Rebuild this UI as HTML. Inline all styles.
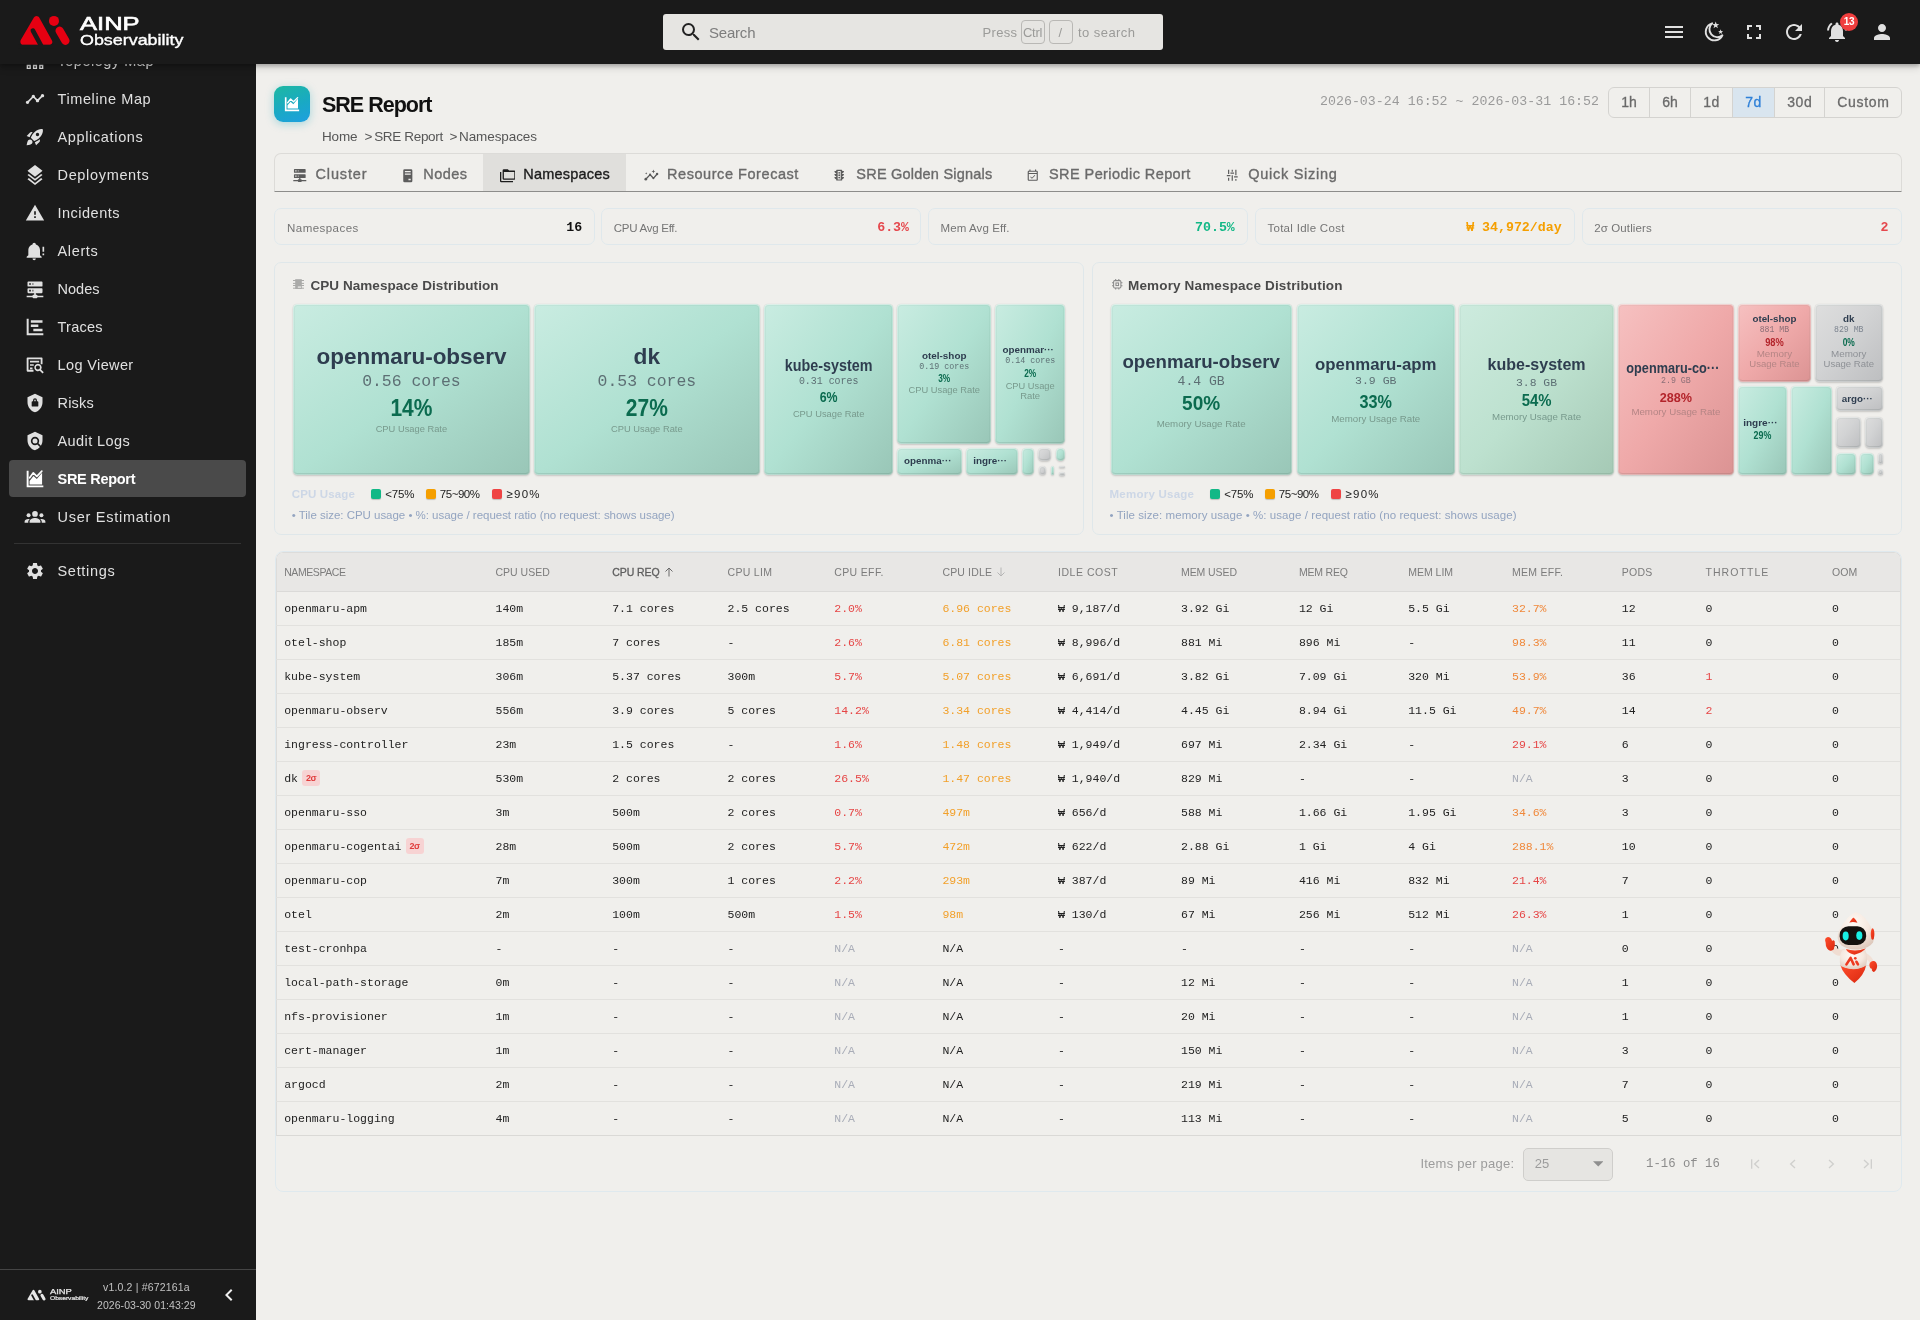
<!DOCTYPE html>
<html lang="en">
<head>
<meta charset="utf-8">
<title>SRE Report - Namespaces</title>
<style>
*{box-sizing:border-box;margin:0;padding:0}
html,body{width:1920px;height:1320px;overflow:hidden;background:#f0efec;font-family:"Liberation Sans",sans-serif;color:#222}
body{position:relative}
#wrap{position:absolute;left:0;top:0;width:1920px;height:1320px;will-change:transform}
.mono{font-family:"Liberation Mono",monospace}
svg{display:block}
.abs{position:absolute}
.t{position:absolute;white-space:nowrap;line-height:1}
/* header */
#hdr{position:absolute;left:0;top:0;width:1920px;height:64px;background:#1a1a1a;z-index:30;box-shadow:0 2px 4px rgba(0,0,0,.25),0 4px 8px rgba(0,0,0,.12)}
#hdr .lg{position:absolute;white-space:nowrap;color:#fff;transform-origin:0 0;line-height:1}
#search{position:absolute;left:663px;top:14px;width:500px;height:36px;background:#e6e5e2;border-radius:3px}
#search .kbd{position:absolute;top:6px;height:24px;border:1px solid #b9b8b5;border-radius:4px}
.hico{position:absolute;top:20px}
#badge{position:absolute;left:1840px;top:13px;width:18px;height:18px;border-radius:9px;background:#f03e3e;color:#fff;font-size:10px;line-height:18px;text-align:center;letter-spacing:-.2px;font-weight:700}
/* sidebar */
#side{position:absolute;left:0;top:64px;width:256px;height:1256px;background:#1a1a1a;z-index:20;overflow:hidden}
.nav{position:absolute;left:9px;width:237px;height:37px;border-radius:4px;color:#e0e0e0;font-size:14.5px}
.nav svg{position:absolute;left:16px;top:8.5px;overflow:visible}
.nav span{position:absolute;left:48.5px;top:9.7px;line-height:19px;white-space:nowrap}
.nav.on{background:#4a4a4a;color:#fff}
.nav.on span{font-weight:700}
.sdiv{position:absolute;left:14px;width:227px;height:1px;background:#333}
#sfoot{position:absolute;left:0;top:1205px;width:256px;height:51px;border-top:1px solid #454545}
/* main cards */
.card{position:absolute;border:1px solid #dfe7ea;border-radius:7px;background:#f0efec}
/* tabs */
#tabs{position:absolute;left:274px;top:152.5px;width:1628px;height:39px;border:1px solid #dcdbd8;border-bottom:1.5px solid #8d8d8b;border-radius:7px 7px 0 0}
#tabs .act{position:absolute;left:208px;top:0;width:143px;height:37px;background:#e0dfdc}
.tabt{position:absolute;top:167px;font-size:14.5px;color:#6a6a6a;white-space:nowrap;line-height:1;-webkit-text-stroke:.35px #6a6a6a}
.tabi{position:absolute;color:#555}
/* range buttons */
#rng{position:absolute;left:1608px;top:86.5px;width:294px;height:31px;border:1px solid #d4d3d0;border-radius:6px;overflow:hidden}
#rng div{position:absolute;top:0;height:29px;border-left:1px solid #d4d3d0}
.rngt{position:absolute;top:95px;font-size:14px;color:#6a6a6a;line-height:1;white-space:nowrap;-webkit-text-stroke:.3px #6a6a6a}
/* stats */
.stat{position:absolute;top:207.9px;width:320.3px;height:37.6px;border:1px solid #dfe8ec;border-radius:7px}
.statl{position:absolute;top:222.5px;font-size:11.5px;color:#757575;line-height:1;white-space:nowrap}
.statv{position:absolute;top:220.5px;font-size:13.25px;font-weight:700;line-height:1;white-space:nowrap;font-family:"Liberation Mono",monospace;text-align:right}
/* treemap */
.tile{position:absolute;border-radius:4.5px;overflow:hidden;box-shadow:0 1px 2px rgba(0,0,0,.16),0 0 1px rgba(0,0,0,.14),inset 0 0 0 1px rgba(255,255,255,.28),inset 0 0 0 2px rgba(0,60,40,.035),inset 0 1px 0 rgba(255,255,255,.3),inset 0 -2px 0 rgba(0,0,0,.06)}
.tile.g{background:linear-gradient(to bottom right,#c9ece1 0%,#b0e1d2 50%,#99c6b7 100%)}
.tile.g2{background:linear-gradient(to bottom right,#cdebde 0%,#bde1cf 50%,#a5c9b5 100%)}
.tile.r{background:linear-gradient(to bottom right,#f6c1c1 0%,#efa9a9 50%,#db9393 100%)}
.tile.k{background:linear-gradient(to bottom right,#dedede 0%,#d2d3d4 45%,#bdbec0 100%)}
.tn{position:absolute;left:0;width:100%;text-align:center;white-space:nowrap;line-height:1;font-weight:700;color:#2e3d4f}
.tv{position:absolute;left:0;width:100%;text-align:center;white-space:nowrap;line-height:1;color:#5d6f74;font-family:"Liberation Mono",monospace}
.tp{position:absolute;left:0;width:100%;text-align:center;white-space:nowrap;line-height:1;font-weight:700;color:#0b6b4f}
.tl{position:absolute;left:0;width:100%;text-align:center;white-space:nowrap;line-height:1;color:#789a8d}
.r .tp{color:#b3242b}.r .tl{color:#b58585}.r .tv{color:#8d6f77}
.k .tl{color:#8e9196}.k .tv{color:#7d8590}
.lgsq{position:absolute;width:10px;height:10px;border-radius:2px;top:488.5px;box-shadow:0 1px 1px rgba(0,0,0,.2)}
.lgt{position:absolute;top:488.5px;font-size:11.5px;color:#222;line-height:1;white-space:nowrap}
/* table */
#tblcard{position:absolute;left:274.5px;top:551px;width:1627.3px;height:640.5px;border:1px solid #dfe9ee;border-radius:8px;overflow:hidden}
#tblin{position:absolute;left:0;top:0;width:1625.3px;height:584.4px;border:1px solid #dddcda;border-bottom:1.6px solid #dad9d6;border-radius:7px 7px 0 0;overflow:hidden}
#thead{position:absolute;left:0;top:0;width:1625px;height:39px;background:#e8e7e5;border-bottom:1px solid #dbdad8}
.th{position:absolute;top:567.4px;font-size:10.5px;color:#7c7c7c;line-height:1;white-space:nowrap}
.th.b{color:#5e5e5e;-webkit-text-stroke:.3px #5e5e5e}
.row{position:absolute;left:276px;width:1624px;height:34px;border-bottom:1px solid #e2e1de}
.td{position:absolute;font-family:"Liberation Mono",monospace;font-size:11.5px;line-height:1;white-space:nowrap;color:#222}
.red{color:#e64545}.org{color:#f2a02a}.org2{color:#f0883a}.na{color:#a9adb8}
.sig{position:absolute;width:18px;height:16px;border-radius:3px;background:#f7d3d3;color:#e03c3c;font-size:9px;line-height:16px;text-align:center;font-family:"Liberation Sans",sans-serif;letter-spacing:-.3px;font-weight:700}

</style>
</head>
<body>
<div id="wrap">
<div id="hdr">
<svg class="abs" style="left:0;top:0" width="200" height="64" viewBox="0 0 200 64"><g>
 <path d="M23.470 41.690 L36.600 19.200 L49.100 41.690 Z" fill="#e60012" stroke="#e60012" stroke-width="6.250" stroke-linejoin="round"/>
 <path d="M32.900 30.600 L42.100 47.500" stroke="#1a1a1a" stroke-width="4.700" stroke-linecap="round" fill="none"/>
 <rect x="18" y="44.900" width="36" height="4" fill="#1a1a1a"/>
 <circle cx="53.970" cy="20.900" r="5" fill="#e60012"/>
 <path d="M59.600 30.750 L65.400 40.750" stroke="#e60012" stroke-width="8.300" stroke-linecap="round" fill="none"/>
</g></svg>
<span class="lg" style="left:80.300px;top:15.100px;font-size:18px;-webkit-text-stroke:.6px #fff;transform:scaleX(1.420)">AINP</span>
<span class="lg" style="left:80.200px;top:32.800px;font-size:14.500px;-webkit-text-stroke:.35px #fff;transform:scaleX(1.234)">Observability</span>
<div id="search">
 <svg class="abs" style="left:16px;top:6.300px" width="24" height="24" viewBox="0 0 24 24"><path fill="#222" d="M15.500 14h-.790l-.280-.270A6.470 6.470 0 0 0 16 9.500 6.500 6.500 0 1 0 9.500 16c1.610 0 3.090-.590 4.230-1.570l.270.280v.790l5 4.990L20.490 19l-4.990-5zm-6 0C7.010 14 5 11.990 5 9.500S7.010 5 9.500 5 14 7.010 14 9.500 11.990 14 9.500 14z"/></svg>
 <span class="t" style="left:46px;top:10.500px;font-size:15px;color:#7d7d7d;letter-spacing:-0.206px">Search</span>
 <span class="t" style="left:319.500px;top:11.500px;font-size:13px;color:#9b9b99;letter-spacing:0.316px">Press</span>
 <span class="kbd" style="left:358px;width:24px"></span><span class="t" style="left:360px;top:12px;font-size:13px;color:#9b9b99;letter-spacing:-.3px">Ctrl</span>
 <span class="kbd" style="left:386px;width:24px"></span><span class="t" style="left:395.500px;top:12px;font-size:13px;color:#9b9b99">/</span>
 <span class="t" style="left:415px;top:11.500px;font-size:13px;color:#9b9b99;letter-spacing:0.439px">to search</span>
</div>
<svg class="hico" style="left:1662px" width="24" height="24" viewBox="0 0 24 24"><path fill="#e0e0e0" d="M3 18h18v-2H3v2zm0-5h18v-2H3v2zm0-7v2h18V6H3z"/></svg>
<svg class="hico" style="left:1702px" width="24" height="24" viewBox="0 0 24 24"><path fill="none" stroke="#e0e0e0" stroke-width="1.900" stroke-linejoin="round" d="M10.200 3.300A8.700 8.700 0 1 0 20.400 15.300A7 7 0 0 1 10.200 3.300z"/><path fill="#e0e0e0" d="M13.700 1.600l.900 2.500 2.600.100-2.100 1.600.800 2.500-2.200-1.500-2.200 1.500.800-2.500-2.100-1.600 2.600-.100zM18.600 9.300l.650 1.800 1.900.050-1.500 1.150.550 1.800-1.600-1.050-1.600 1.050.550-1.800-1.500-1.150 1.900-.050z"/></svg>
<svg class="hico" style="left:1742px" width="24" height="24" viewBox="0 0 24 24"><path fill="#e0e0e0" d="M7 14H5v5h5v-2H7v-3zm-2-4h2V7h3V5H5v5zm12 7h-3v2h5v-5h-2v3zM14 5v2h3v3h2V5h-5z"/></svg>
<svg class="hico" style="left:1782px" width="24" height="24" viewBox="0 0 24 24"><path fill="#e0e0e0" d="M17.650 6.350C16.200 4.900 14.210 4 12 4c-4.420 0-7.990 3.580-7.990 8s3.570 8 7.990 8c3.730 0 6.840-2.550 7.730-6h-2.080c-.820 2.330-3.040 4-5.650 4-3.310 0-6-2.690-6-6s2.690-6 6-6c1.660 0 3.140.690 4.220 1.780L13 11h7V4l-2.350 2.350z"/></svg>
<svg class="hico" style="left:1825px" width="24" height="24" viewBox="0 0 24 24"><path fill="#e0e0e0" d="M7.580 4.080L6.150 2.650C3.750 4.480 2.170 7.300 2.030 10.500h2c.150-2.650 1.510-4.970 3.550-6.420zm12.390 6.420h2c-.150-3.200-1.730-6.020-4.120-7.850l-1.420 1.430c2.020 1.450 3.390 3.770 3.540 6.420zM18 11c0-3.070-1.640-5.640-4.500-6.320V4c0-.830-.670-1.500-1.500-1.500s-1.500.670-1.500 1.500v.680C7.630 5.360 6 7.920 6 11v5l-2 2v1h16v-1l-2-2v-5zm-6 11c.140 0 .270-.010.400-.040.650-.140 1.180-.580 1.440-1.180.100-.240.150-.500.150-.780h-4c.010 1.100.900 2 2.010 2z"/></svg>
<div id="badge">13</div>
<svg class="hico" style="left:1870px" width="24" height="24" viewBox="0 0 24 24"><path fill="#e0e0e0" d="M12 12c2.210 0 4-1.790 4-4s-1.790-4-4-4-4 1.790-4 4 1.790 4 4 4zm0 2c-2.670 0-8 1.340-8 4v2h16v-2c0-2.660-5.330-4-8-4z"/></svg>
</div>
<div id="side">
<div class="nav" style="top:-22.0px"><svg width="20" height="20" viewBox="0 0 24 24" fill="currentColor"><path d="M2 16.600h5v5H2zm7.500 0h5v5h-5zM17 16.600h5v5h-5zM3.600 18.200v1.800h1.800v-1.800zm7.500 0v1.800h1.800v-1.800zm7.500 0v1.800h1.800v-1.800z" fill-rule="evenodd"/></svg><span style="letter-spacing:0.520px">Topology Map</span></div>
<div class="nav" style="top:16.0px"><svg width="20" height="20" viewBox="0 0 24 24" fill="currentColor"><path d="M23 8c0 1.100-.900 2-2 2-.180 0-.350-.020-.510-.070l-3.560 3.550c.050.160.070.340.070.520 0 1.100-.900 2-2 2s-2-.900-2-2c0-.180.020-.360.070-.520l-2.550-2.550c-.160.050-.340.070-.520.070s-.360-.020-.520-.070l-4.550 4.560c.050.160.070.330.070.510 0 1.100-.900 2-2 2s-2-.900-2-2 .900-2 2-2c.180 0 .350.020.510.070l4.560-4.550C8.020 9.360 8 9.180 8 9c0-1.100.900-2 2-2s2 .900 2 2c0 .180-.020.360-.070.520l2.550 2.550c.160-.050.340-.070.520-.070s.360.020.520.070l3.550-3.560C19.020 8.350 19 8.180 19 8c0-1.100.900-2 2-2s2 .900 2 2z"/></svg><span style="letter-spacing:0.609px">Timeline Map</span></div>
<div class="nav" style="top:54.0px"><svg width="20" height="20" viewBox="0 0 24 24" fill="currentColor"><path d="M9.190 6.350c-2.040 2.290-3.440 5.580-3.570 5.890L2 10.690l4.050-4.050c.470-.470 1.150-.680 1.810-.550l1.330.260zM11.170 17s3.740-1.550 5.890-3.700c5.400-5.400 4.500-9.620 4.210-10.570-.950-.300-5.170-1.190-10.570 4.210C8.550 9.090 7 12.830 7 12.830L11.170 17zm6.480-2.190c-2.290 2.040-5.580 3.440-5.890 3.570L13.310 22l4.050-4.050c.470-.470.680-1.150.550-1.810l-.260-1.330zM9 18c0 .830-.340 1.580-.880 2.120C6.940 21.300 2 22 2 22s.700-4.940 1.880-6.120C4.420 15.340 5.170 15 6 15c1.660 0 3 1.340 3 3zm4-9c0-1.100.900-2 2-2s2 .900 2 2-.900 2-2 2-2-.900-2-2z"/></svg><span style="letter-spacing:0.647px">Applications</span></div>
<div class="nav" style="top:92.0px"><svg width="20" height="20" viewBox="0 0 24 24" fill="currentColor"><path d="M12 0L3 7l1.630 1.270L12 14l7.360-5.730L21 7l-9-7zm7.370 10.730L12 16.460l-7.380-5.730L3 12l9 7 9-7-1.630-1.270zm0 5L12 21.460l-7.380-5.730L3 17l9 7 9-7-1.630-1.270z"/></svg><span style="letter-spacing:0.667px">Deployments</span></div>
<div class="nav" style="top:130.0px"><svg width="20" height="20" viewBox="0 0 24 24" fill="currentColor"><path d="M1 21h22L12 2 1 21zm12-3h-2v-2h2v2zm0-4h-2v-4h2v4z"/></svg><span style="letter-spacing:0.494px">Incidents</span></div>
<div class="nav" style="top:168.0px"><svg width="20" height="20" viewBox="0 0 24 24" fill="currentColor"><path d="M21 7h2v6h-2zm0 8h2v2h-2zM11 2a2 2 0 0 0-2 2v.290C6.120 5.140 4 7.820 4 11v6l-2 2v1h18v-1l-2-2v-6c0-3.180-2.120-5.860-5-6.710V4a2 2 0 0 0-2-2zm-2 19a2 2 0 0 0 4 0z"/></svg><span style="letter-spacing:0.644px">Alerts</span></div>
<div class="nav" style="top:206.0px"><svg width="20" height="20" viewBox="0 0 24 24" fill="currentColor"><path fill-rule="evenodd" d="M13 19h1a1 1 0 0 1 1 1h7v2h-7a1 1 0 0 1-1 1h-4a1 1 0 0 1-1-1H2v-2h7a1 1 0 0 1 1-1h1v-2H4a1 1 0 0 1-1-1v-4a1 1 0 0 1 1-1h16a1 1 0 0 1 1 1v4a1 1 0 0 1-1 1h-7v2zM4 3h16a1 1 0 0 1 1 1v4a1 1 0 0 1-1 1H4a1 1 0 0 1-1-1V4a1 1 0 0 1 1-1zm5 4h1V5H9v2zm0 8h1v-2H9v2zM5 5v2h2V5H5zm0 8v2h2v-2H5z"/></svg><span style="letter-spacing:0.020px">Nodes</span></div>
<div class="nav" style="top:244.0px"><svg width="20" height="20" viewBox="0 0 24 24" fill="currentColor"><path d="M2 2h2.400v17.600H22V22H2zM7 4h14v3H7zm0 5h9v3H7zm3 5h11v3H10z"/></svg><span style="letter-spacing:0.244px">Traces</span></div>
<div class="nav" style="top:282.0px"><svg width="20" height="20" viewBox="0 0 24 24" fill="currentColor"><path fill-rule="evenodd" d="M3 3h17a1 1 0 0 1 1 1v7.200h-2.200V5.200H4.200v12.600h6V20H3a1 1 0 0 1-1-1V4a1 1 0 0 1 1-1zm3 4h11v2H6zm0 4h4.500v2H6zm0 4h3v2H6zm9.500-4.500a4.500 4.500 0 0 1 3.750 7l3.250 3.250-1.500 1.500-3.250-3.250A4.500 4.500 0 1 1 15.500 10.500zm0 2a2.500 2.500 0 1 0 0 5 2.500 2.500 0 0 0 0-5z"/></svg><span style="letter-spacing:0.380px">Log Viewer</span></div>
<div class="nav" style="top:320.0px"><svg width="20" height="20" viewBox="0 0 24 24" fill="currentColor"><path fill-rule="evenodd" d="M12 1L3 5v6c0 5.550 3.840 10.740 9 12 5.160-1.260 9-6.450 9-12V5l-9-4zm0 5.200a2.300 2.300 0 0 1 2.300 2.300v1.300h.700a1 1 0 0 1 1 1v4.400a1 1 0 0 1-1 1H9a1 1 0 0 1-1-1v-4.400a1 1 0 0 1 1-1h.700V8.500A2.300 2.300 0 0 1 12 6.200zm0 1.500a.800.800 0 0 0-.800.800v1.300h1.600V8.500a.800.800 0 0 0-.800-.800z"/></svg><span style="letter-spacing:0.212px">Risks</span></div>
<div class="nav" style="top:358.0px"><svg width="20" height="20" viewBox="0 0 24 24" fill="currentColor"><path d="M21 5l-9-4-9 4v6c0 5.550 3.840 10.740 9 12 2.300-.560 4.330-1.900 5.880-3.710l-3.120-3.120c-1.940 1.290-4.580 1.070-6.290-.640-1.950-1.950-1.950-5.120 0-7.070 1.950-1.950 5.120-1.950 7.070 0 1.710 1.710 1.920 4.350.640 6.290l2.900 2.900C20.290 15.690 21 13.380 21 11V5z"/><circle cx="12" cy="12" r="3"/></svg><span style="letter-spacing:0.419px">Audit Logs</span></div>
<div class="nav on" style="top:396.0px"><svg width="20" height="20" viewBox="0 0 24 24" fill="currentColor"><path d="M2 2h2.300v17.700H22V22H2z"/><path d="M5.500 18.500v-4.200l4.700-5.800 4 3.600 6.300-7.600v14z"/><path fill="none" stroke="currentColor" stroke-width="2" stroke-linejoin="round" stroke-linecap="round" d="M5.600 10.600l4.400-6 4.200 4.200 6-6.300"/></svg><span style="letter-spacing:-0.286px">SRE Report</span></div>
<div class="nav" style="top:434.0px"><svg width="20" height="20" viewBox="0 0 24 24" fill="currentColor"><circle cx="12" cy="8.300" r="3.400"/><path d="M5.500 19v-1.500c0-2.700 3.500-4.300 6.500-4.300s6.500 1.600 6.500 4.300V19z"/><circle cx="4.300" cy="10" r="2.400"/><path d="M-.500 19v-1.300c0-2 2.100-3.300 4.600-3.300.600 0 1.200.080 1.700.220C4.500 15.600 3.900 16.600 3.900 17.800V19z"/><circle cx="19.700" cy="10" r="2.400"/><path d="M24.500 19v-1.300c0-2-2.100-3.300-4.600-3.300-.600 0-1.200.080-1.700.220 1.300.980 1.900 1.980 1.900 3.180V19z"/></svg><span style="letter-spacing:0.740px">User Estimation</span></div>
<div class="nav" style="top:488.0px"><svg width="20" height="20" viewBox="0 0 24 24" fill="currentColor"><path d="M19.140 12.940c.040-.300.060-.610.060-.940 0-.320-.020-.640-.070-.940l2.030-1.580c.180-.140.230-.410.120-.610l-1.920-3.320c-.120-.220-.370-.290-.590-.220l-2.390.960c-.500-.380-1.030-.700-1.620-.940l-.360-2.540c-.040-.240-.240-.410-.480-.410h-3.840c-.240 0-.430.170-.470.410l-.360 2.540c-.590.240-1.130.570-1.620.940l-2.390-.960c-.220-.080-.470 0-.590.220L2.740 8.870c-.120.210-.080.470.120.610l2.030 1.580c-.050.300-.090.630-.090.940s.020.640.070.940l-2.030 1.580c-.180.140-.230.410-.120.610l1.920 3.320c.120.220.370.290.590.220l2.390-.960c.500.380 1.030.700 1.620.940l.360 2.540c.050.240.240.410.480.410h3.840c.240 0 .440-.170.470-.410l.360-2.540c.590-.240 1.130-.560 1.620-.940l2.390.960c.220.080.470 0 .590-.220l1.920-3.320c.120-.220.070-.470-.120-.610l-2.010-1.580zM12 15.600c-1.980 0-3.600-1.620-3.600-3.600s1.620-3.600 3.600-3.600 3.600 1.620 3.600 3.600-1.620 3.600-3.600 3.600z"/></svg><span style="letter-spacing:0.699px">Settings</span></div>
<div class="sdiv" style="top:479px"></div>
<div id="sfoot">
<svg class="abs" style="left:20px;top:13.500px" width="73.500" height="23.500" viewBox="0 0 200 64"><g>
 <path d="M23.470 41.690 L36.600 19.200 L49.100 41.690 Z" fill="#e6e6e6" stroke="#e6e6e6" stroke-width="6.250" stroke-linejoin="round"/>
 <path d="M32.900 30.600 L42.100 47.500" stroke="#1a1a1a" stroke-width="4.700" stroke-linecap="round" fill="none"/>
 <rect x="18" y="44.900" width="36" height="4" fill="#1a1a1a"/>
 <circle cx="53.970" cy="20.900" r="5" fill="#e6e6e6"/>
 <path d="M59.600 30.750 L65.400 40.750" stroke="#e6e6e6" stroke-width="8.300" stroke-linecap="round" fill="none"/>
</g></svg>
<span class="t" style="left:49.800px;top:19.300px;font-size:6.600px;color:#e6e6e6;-webkit-text-stroke:.25px #e6e6e6;transform-origin:0 0;transform:scaleX(1.420)">AINP</span>
<span class="t" style="left:49.700px;top:26.100px;font-size:5.400px;color:#e6e6e6;-webkit-text-stroke:.2px #e6e6e6;transform-origin:0 0;transform:scaleX(1.234)">Observability</span>
<span class="t" style="left:103px;top:11.500px;font-size:10.500px;color:#c2c2c2;letter-spacing:0.163px">v1.0.2 | #672161a</span>
<span class="t" style="left:97px;top:29.700px;font-size:10.500px;color:#c2c2c2;letter-spacing:0.056px">2026-03-30 01:43:29</span>
<svg class="abs" style="left:217px;top:13px" width="24" height="24" viewBox="0 0 24 24"><path fill="#eee" d="M15.410 7.410L14 6l-6 6 6 6 1.410-1.410L10.830 12z"/></svg>
</div>
</div>
<div class="abs" style="left:274px;top:86px;width:36px;height:36px;border-radius:9px;background:linear-gradient(160deg,#1db8a2 0%,#19a9c4 55%,#1d9fe0 100%);box-shadow:0 2px 8px rgba(30,170,190,.35)">
<svg class="abs" style="left:9px;top:9px" width="18" height="18" viewBox="0 0 24 24" fill="#fff"><path d="M2.500 3h2.200v16.300H21.500v2.200h-19z"/><path d="M6 18v-4.500l4.200-4.600 3.600 3.300 6.200-7.400V18z"/><path fill="none" stroke="#fff" stroke-width="1.800" stroke-linejoin="round" stroke-linecap="round" d="M6.200 10.300l4-5 3.800 3.600 5.500-5.400"/></svg></div>
<span class="t" style="left:322px;top:94.500px;font-size:21.500px;font-weight:700;color:#111;letter-spacing:-0.997px">SRE Report</span>
<span class="t" style="left:322px;top:129.5px;font-size:13.500px;color:#565656;letter-spacing:-0.172px">Home</span>
<span class="t" style="left:364.500px;top:129.5px;font-size:13.500px;color:#565656">&gt;</span>
<span class="t" style="left:374.200px;top:129.5px;font-size:13.500px;color:#565656;letter-spacing:-0.337px">SRE Report</span>
<span class="t" style="left:449.600px;top:129.5px;font-size:13.500px;color:#565656">&gt;</span>
<span class="t" style="left:459px;top:129.5px;font-size:13.500px;color:#565656;letter-spacing:-0.089px">Namespaces</span>
<span class="t mono" style="left:1320px;top:94.500px;font-size:13.250px;color:#9a9a9a;letter-spacing:0.021px">2026-03-24 16:52 ~ 2026-03-31 16:52</span>
<div id="rng"><div style="left:39.800px;width:41px"></div><div style="left:80.800px;width:42px"></div><div style="left:122.800px;width:42px;background:#d9e5ef"></div><div style="left:164.800px;width:50px"></div><div style="left:214.800px;width:80px"></div></div>
<span class="rngt" style="left:1621.3px;letter-spacing:-0.178px">1h</span>
<span class="rngt" style="left:1662.3px;letter-spacing:-0.178px">6h</span>
<span class="rngt" style="left:1703.3px;letter-spacing:0.422px">1d</span>
<span class="rngt" style="left:1745.3px;color:#2f80d8;-webkit-text-stroke:.3px #2f80d8;letter-spacing:0.422px">7d</span>
<span class="rngt" style="left:1787.3px;letter-spacing:0.520px">30d</span>
<span class="rngt" style="left:1837.3px;letter-spacing:0.693px">Custom</span>
<div id="tabs"><div class="act"></div></div>
<span class="tabt" style="left:315.5px;letter-spacing:0.844px">Cluster</span>
<span class="tabt" style="left:423.3px;letter-spacing:0.420px">Nodes</span>
<span class="tabt" style="left:523.3px;color:#1c1c1c;-webkit-text-stroke:.35px #1c1c1c;letter-spacing:0.208px">Namespaces</span>
<span class="tabt" style="left:667px;letter-spacing:0.556px">Resource Forecast</span>
<span class="tabt" style="left:856.3px;letter-spacing:0.224px">SRE Golden Signals</span>
<span class="tabt" style="left:1049px;letter-spacing:0.423px">SRE Periodic Report</span>
<span class="tabt" style="left:1248.2px;letter-spacing:0.737px">Quick Sizing</span>
<svg class="tabi" style="left:291.600px;top:167.200px" width="15.600" height="15.600" viewBox="0 0 24 24" fill="#5c5c5c"><path fill-rule="evenodd" d="M13 19h1a1 1 0 0 1 1 1h7v2h-7a1 1 0 0 1-1 1h-4a1 1 0 0 1-1-1H2v-2h7a1 1 0 0 1 1-1h1v-2H4a1 1 0 0 1-1-1v-4a1 1 0 0 1 1-1h16a1 1 0 0 1 1 1v4a1 1 0 0 1-1 1h-7v2zM4 3h16a1 1 0 0 1 1 1v4a1 1 0 0 1-1 1H4a1 1 0 0 1-1-1V4a1 1 0 0 1 1-1zm5 4h1V5H9v2zm0 8h1v-2H9v2zM5 5v2h2V5H5zm0 8v2h2v-2H5z"/></svg>
<svg class="tabi" style="left:399.650px;top:167.900px" width="15.600" height="15.600" viewBox="0 0 24 24" fill="#5c5c5c"><path fill-rule="evenodd" d="M7 2h10a2 2 0 0 1 2 2v16a2 2 0 0 1-2 2H7a2 2 0 0 1-2-2V4a2 2 0 0 1 2-2zm.500 2.500v2h9v-2h-9zm0 4v2h9v-2h-9zm5.500 8v2.500h3.500v-2.500H13z"/></svg>
<svg class="tabi" style="left:499.800px;top:168.100px" width="15.600" height="15.600" viewBox="0 0 24 24" fill="#1c1c1c"><path d="M22 4a2 2 0 0 1 2 2v10a2 2 0 0 1-2 2H6a2 2 0 0 1-2-2V4a2 2 0 0 1 2-2h6l2 2h8M2 6v14h18v2H2a2 2 0 0 1-2-2V6h2m4 0v10h16V6H6z"/></svg>
<svg class="tabi" style="left:643px;top:168px" width="16" height="14" viewBox="0 0 16 14" fill="#585858"><path d="M2.800 11.200L7.100 6.600l3.300 3.700 3.700-4.300" fill="none" stroke="#585858" stroke-width="1.300" stroke-linecap="round" stroke-linejoin="round"/><circle cx="2.800" cy="11.200" r="1.350"/><circle cx="7.100" cy="6.600" r="1.100"/><circle cx="14.100" cy="6" r="1.200"/><circle cx="10.400" cy="10.300" r=".900"/><path d="M10.400 1.600l.550 1.350 1.350.550-1.350.550-.550 1.350-.550-1.350-1.350-.550 1.350-.550zM3.200 4.200l.350.750.750.350-.750.350-.350.750-.350-.750-.750-.350.750-.350z"/></svg>
<svg class="tabi" style="left:831.800px;top:168.200px" width="14.400" height="14.400" viewBox="0 0 24 24" fill="#5c5c5c"><path fill-rule="evenodd" d="M20 10h-3V8.860c1.720-.450 3-2 3-3.860h-3V4a1 1 0 0 0-1-1H8a1 1 0 0 0-1 1v1H4c0 1.860 1.280 3.410 3 3.860V10H4c0 1.860 1.280 3.410 3 3.860V15H4c0 1.860 1.280 3.410 3 3.860V20a1 1 0 0 0 1 1h8a1 1 0 0 0 1-1v-1.140c1.720-.450 3-2 3-3.860h-3v-1.140c1.720-.450 3-2 3-3.860zM9.500 5h5v14h-5zm2.500 12.500a1.500 1.500 0 1 0 0-3 1.500 1.500 0 0 0 0 3zm0-4a1.500 1.500 0 1 0 0-3 1.500 1.500 0 0 0 0 3zm0-4a1.500 1.500 0 1 0 0-3 1.500 1.500 0 0 0 0 3z"/></svg>
<svg class="tabi" style="left:1025.500px;top:168.500px" width="13.500" height="13.500" viewBox="0 0 24 24" fill="#5c5c5c"><path d="M19 3h-1V1h-2v2H8V1H6v2H5c-1.110 0-2 .900-2 2v14a2 2 0 0 0 2 2h14a2 2 0 0 0 2-2V5a2 2 0 0 0-2-2zm0 16H5V9h14v10zM5 7V5h14v2H5zm5.560 10.460l5.930-5.930-1.060-1.060-4.870 4.870-2.110-2.110-1.060 1.060 3.170 3.170z"/></svg>
<svg class="tabi" style="left:1225px;top:168px" width="14.500" height="14.500" viewBox="0 0 24 24" fill="#5c5c5c"><path d="M5 3h2v7H5zM5 16h2v5H5zM3 11.500h6v2.200H3zM11 3h2v3h-2zM11 12h2v9h-2zM9 7.500h6v2.200H9zM17 3h2v9h-2zM17 18h2v3h-2zM15 13.500h6v2.200h-6z"/></svg>
<div class="stat" style="left:274.3px"></div>
<span class="statl" style="left:287.0px;letter-spacing:0.464px">Namespaces</span>
<span class="statv" style="left:382.20000000000005px;width:200px;color:#111">16</span>
<div class="stat" style="left:601.1px"></div>
<span class="statl" style="left:613.8000000000001px;letter-spacing:-0.273px">CPU Avg Eff.</span>
<span class="statv" style="left:709.0px;width:200px;color:#e5484d">6.3%</span>
<div class="stat" style="left:927.9px"></div>
<span class="statl" style="left:940.6px;letter-spacing:0.085px">Mem Avg Eff.</span>
<span class="statv" style="left:1034.8px;width:200px;color:#12b886">70.5%</span>
<div class="stat" style="left:1254.7px"></div>
<span class="statl" style="left:1267.4px;letter-spacing:0.295px">Total Idle Cost</span>
<span class="statv" style="left:1361.6000000000001px;width:200px;color:#f59f00">&#8361; 34,972/day</span>
<div class="stat" style="left:1581.5px"></div>
<span class="statl" style="left:1594.2px;letter-spacing:0.119px">2&sigma; Outliers</span>
<span class="statv" style="left:1688.4px;width:200px;color:#e5484d">2</span>
<div class="card" style="left:274.300px;top:262px;width:809.300px;height:272.500px"></div>
<div class="card" style="left:1091.900px;top:262px;width:809.700px;height:272.500px"></div>
<svg class="abs" style="left:292px;top:278px" width="13" height="12" viewBox="0 0 13 12"><rect x="3.200" y="1.200" width="6.600" height="9.700" fill="#aaaaa8"/><path d="M1 2.500h11M1 5.400h11M1 7.500h11M1 10.200h11" stroke="#aaaaa8" stroke-width="1"/><rect x="5.800" y="8.300" width="3.200" height="1.600" fill="#dededc"/></svg>
<span class="t" style="left:310.500px;top:278.700px;font-size:13.500px;font-weight:700;color:#4a4a4a;letter-spacing:0.048px">CPU Namespace Distribution</span>
<svg class="abs" style="left:1110.500px;top:278px" width="12.500" height="12.500" viewBox="0 0 24 24" fill="none" stroke="#8a8a8a" stroke-width="2"><rect x="5" y="5" width="14" height="14" rx="2"/><rect x="9.500" y="9.500" width="5" height="5"/><path d="M9 2v3m6-3v3M9 19v3m6-3v3M2 9h3m-3 6h3m14-6h3m-3 6h3"/></svg>
<span class="t" style="left:1128px;top:278.700px;font-size:13.500px;font-weight:700;color:#4a4a4a;letter-spacing:0.158px">Memory Namespace Distribution</span>
<div class="tile g" style="left:293.2px;top:304.1px;width:236.8px;height:171.4px"><span class="tn" style="top:42.32px;font-size:22px;transform:scaleX(1.0225);">openmaru-observ</span><span class="tv" style="top:69.49px;font-size:16px;transform:scaleX(1.0259);">0.56 cores</span><span class="tp" style="top:91.45px;font-size:24.5px;transform:scaleX(0.8563);">14%</span><span class="tl" style="top:119.65px;font-size:9.5px;transform:scaleX(0.9811);">CPU Usage Rate</span></div>
<div class="tile g" style="left:534.3px;top:304.1px;width:225.7px;height:171.4px"><span class="tn" style="top:42.32px;font-size:22px;transform:scaleX(1.0316);">dk</span><span class="tv" style="top:69.49px;font-size:16px;transform:scaleX(1.0259);">0.53 cores</span><span class="tp" style="top:91.45px;font-size:24.5px;transform:scaleX(0.8563);">27%</span><span class="tl" style="top:119.65px;font-size:9.5px;transform:scaleX(0.9811);">CPU Usage Rate</span></div>
<div class="tile g" style="left:763.9px;top:304.1px;width:129.3px;height:171.4px"><span class="tn" style="top:53.32px;font-size:16.5px;transform:scaleX(0.8702);">kube-system</span><span class="tv" style="top:72.87px;font-size:10px;transform:scaleX(0.9914);">0.31 cores</span><span class="tp" style="top:84.55px;font-size:15.5px;transform:scaleX(0.7989);">6%</span><span class="tl" style="top:104.84px;font-size:9.5px;transform:scaleX(0.9811);">CPU Usage Rate</span></div>
<div class="tile g" style="left:896.9px;top:304.1px;width:94.5px;height:140.2px"><span class="tn" style="top:46.75px;font-size:9.5px;transform:scaleX(1.0409);">otel-shop</span><span class="tv" style="top:59.07px;font-size:8.3px;transform:scaleX(1.0041);">0.19 cores</span><span class="tp" style="top:68.82px;font-size:10.5px;transform:scaleX(0.7901);">3%</span><span class="tl" style="top:81.34px;font-size:9.5px;transform:scaleX(0.9811);">CPU Usage Rate</span></div>
<div class="tile g" style="left:994.9px;top:304.1px;width:70.3px;height:140.2px"><span class="tn" style="top:40.75px;font-size:9.5px;transform:scaleX(1.0338);margin-left:-1.9px;">openmar&middot;&middot;&middot;</span><span class="tv" style="top:53.07px;font-size:8.3px;transform:scaleX(1.0041);">0.14 cores</span><span class="tp" style="top:64.12px;font-size:10.5px;transform:scaleX(0.7901);">2%</span><span class="tl" style="top:76.65px;font-size:9.5px;transform:scaleX(0.9766);">CPU Usage</span><span class="tl" style="top:86.65px;font-size:9.5px;transform:scaleX(0.9961);">Rate</span></div>
<div class="tile g" style="left:896.9px;top:448.3px;width:65.5px;height:27.2px"><span class="tn" style="top:7.94px;font-size:9.5px;transform:scaleX(1.0344);margin-left:-1.9px;">openma&middot;&middot;&middot;</span></div>
<div class="tile g" style="left:965.9px;top:448.3px;width:52.3px;height:27.2px"><span class="tn" style="top:7.94px;font-size:9.5px;transform:scaleX(1.0392);margin-left:-1.9px;">ingre&middot;&middot;&middot;</span></div>
<div class="tile g" style="left:1022.4px;top:448.3px;width:11.8px;height:27.2px"></div>
<div class="tile k" style="left:1038.4px;top:448.3px;width:12.8px;height:12.7px"></div>
<div class="tile g" style="left:1055.6px;top:448.3px;width:9.6px;height:12.9px"></div>
<div class="tile k" style="left:1038.7px;top:466.3px;width:6.9px;height:9.2px"></div>
<div class="tile g" style="left:1050.6px;top:466.3px;width:3.4px;height:9.2px"></div>
<div class="tile k" style="left:1059.0px;top:466.0px;width:5.8px;height:2.3px"></div>
<div class="tile k" style="left:1059.0px;top:472.0px;width:5.8px;height:3.5px"></div>
<span class="t" style="left:291.8px;top:488.900px;font-size:11.500px;font-weight:700;color:#cdd7e6;letter-spacing:0.125px">CPU Usage</span><div class="lgsq" style="left:371px;background:#12b886"></div><span class="lgt" style="left:385.3px;letter-spacing:-0.145px">&lt;75%</span><div class="lgsq" style="left:426px;background:#f59f00"></div><span class="lgt" style="left:439.8px;letter-spacing:-0.466px">75~90%</span><div class="lgsq" style="left:492px;background:#ef4444"></div><span class="lgt" style="left:506.6px;letter-spacing:1.185px">&ge;90%</span>
<span class="t" style="left:291.800px;top:509.600px;font-size:11.500px;color:#93a4c0;letter-spacing:-0.024px">&bull; Tile size: CPU usage &bull; %: usage / request ratio (no request: shows usage)</span>
<div class="tile g" style="left:1111.4px;top:304.1px;width:180.3px;height:171.4px"><span class="tn" style="top:48.84px;font-size:18.5px;transform:scaleX(1.0079);">openmaru-observ</span><span class="tv" style="top:71.23px;font-size:13px;transform:scaleX(1.0083);">4.4 GB</span><span class="tp" style="top:89.27px;font-size:20.5px;transform:scaleX(0.9286);">50%</span><span class="tl" style="top:114.84px;font-size:9.5px;transform:scaleX(1.0215);">Memory Usage Rate</span></div>
<div class="tile g" style="left:1297.0px;top:304.1px;width:157.5px;height:171.4px"><span class="tn" style="top:52.02px;font-size:16.5px;transform:scaleX(1.0186);">openmaru-apm</span><span class="tv" style="top:71.35px;font-size:11.5px;transform:scaleX(0.9995);">3.9 GB</span><span class="tp" style="top:89.44px;font-size:17.5px;transform:scaleX(0.9277);">33%</span><span class="tl" style="top:109.55px;font-size:9.5px;transform:scaleX(1.0215);">Memory Usage Rate</span></div>
<div class="tile g2" style="left:1459.3px;top:304.1px;width:155.1px;height:171.4px"><span class="tn" style="top:52.27px;font-size:17px;transform:scaleX(0.9429);">kube-system</span><span class="tv" style="top:72.75px;font-size:11.5px;transform:scaleX(0.9898);">3.8 GB</span><span class="tp" style="top:87.99px;font-size:16.5px;transform:scaleX(0.9022);">54%</span><span class="tl" style="top:107.95px;font-size:9.5px;transform:scaleX(1.0215);">Memory Usage Rate</span></div>
<div class="tile r" style="left:1617.9px;top:304.1px;width:115.8px;height:171.4px"><span class="tn" style="top:57.20px;font-size:14.5px;transform:scaleX(0.8764);margin-left:-2.9px;">openmaru-co&middot;&middot;&middot;</span><span class="tv" style="top:73.07px;font-size:8.3px;transform:scaleX(1.0008);">2.9 GB</span><span class="tp" style="top:86.86px;font-size:13.5px;transform:scaleX(0.9354);">288%</span><span class="tl" style="top:102.55px;font-size:9.5px;transform:scaleX(1.0215);">Memory Usage Rate</span></div>
<div class="tile r" style="left:1737.9px;top:304.1px;width:72.9px;height:77.5px"><span class="tn" style="top:9.95px;font-size:9.5px;transform:scaleX(1.0292);">otel-shop</span><span class="tv" style="top:21.77px;font-size:8.3px;transform:scaleX(0.9908);">881 MB</span><span class="tp" style="top:32.82px;font-size:10.5px;transform:scaleX(0.8851);">98%</span><span class="tl" style="top:44.95px;font-size:9.5px;transform:scaleX(1.0346);">Memory</span><span class="tl" style="top:55.05px;font-size:9.5px;transform:scaleX(1.0045);">Usage Rate</span></div>
<div class="tile k" style="left:1815.1px;top:304.1px;width:67.5px;height:77.5px"><span class="tn" style="top:9.95px;font-size:9.5px;transform:scaleX(1.0366);">dk</span><span class="tv" style="top:21.77px;font-size:8.3px;transform:scaleX(0.9908);">829 MB</span><span class="tp" style="top:32.82px;font-size:10.5px;transform:scaleX(0.8033);">0%</span><span class="tl" style="top:44.95px;font-size:9.5px;transform:scaleX(1.0346);">Memory</span><span class="tl" style="top:55.05px;font-size:9.5px;transform:scaleX(1.0045);">Usage Rate</span></div>
<div class="tile g" style="left:1737.9px;top:386.1px;width:48.9px;height:89.4px"><span class="tn" style="top:31.65px;font-size:9.5px;transform:scaleX(1.0544);margin-left:-1.9px;">ingre&middot;&middot;&middot;</span><span class="tp" style="top:43.82px;font-size:10.5px;transform:scaleX(0.8470);">29%</span></div>
<div class="tile g" style="left:1790.7px;top:386.1px;width:41.1px;height:89.4px"></div>
<div class="tile k" style="left:1835.9px;top:386.1px;width:46.7px;height:24.9px"><span class="tn" style="top:7.95px;font-size:9.5px;transform:scaleX(1.0306);margin-left:-1.9px;">argo&middot;&middot;&middot;</span></div>
<div class="tile k" style="left:1835.9px;top:417.1px;width:24.7px;height:31.1px"></div>
<div class="tile k" style="left:1865.0px;top:417.1px;width:17.6px;height:31.1px"></div>
<div class="tile g" style="left:1835.9px;top:453.1px;width:19.8px;height:22.4px"></div>
<div class="tile g" style="left:1859.7px;top:453.1px;width:14.3px;height:22.4px"></div>
<div class="tile k" style="left:1877.9px;top:453.1px;width:4.7px;height:11.3px"></div>
<div class="tile k" style="left:1877.9px;top:468.6px;width:4.7px;height:6.9px"></div>
<span class="t" style="left:1109.5px;top:488.900px;font-size:11.500px;font-weight:700;color:#cdd7e6;letter-spacing:0.244px">Memory Usage</span><div class="lgsq" style="left:1210px;background:#12b886"></div><span class="lgt" style="left:1224.3px;letter-spacing:-0.145px">&lt;75%</span><div class="lgsq" style="left:1265px;background:#f59f00"></div><span class="lgt" style="left:1278.8px;letter-spacing:-0.466px">75~90%</span><div class="lgsq" style="left:1331px;background:#ef4444"></div><span class="lgt" style="left:1345.6px;letter-spacing:1.185px">&ge;90%</span>
<span class="t" style="left:1109.500px;top:509.600px;font-size:11.500px;color:#93a4c0;letter-spacing:0.067px">&bull; Tile size: memory usage &bull; %: usage / request ratio (no request: shows usage)</span>
<div id="tblcard"><div id="tblin"><div id="thead"></div></div></div>
<span class="th" style="left:284.2px;letter-spacing:-0.420px">NAMESPACE</span>
<span class="th" style="left:495.5px;letter-spacing:0.005px">CPU USED</span>
<span class="th b" style="left:612.2px;letter-spacing:-0.074px">CPU REQ</span>
<span class="th" style="left:727.5px;letter-spacing:0.301px">CPU LIM</span>
<span class="th" style="left:834.3px;letter-spacing:0.347px">CPU EFF.</span>
<span class="th" style="left:942.4px;letter-spacing:0.152px">CPU IDLE</span>
<span class="th" style="left:1058px;letter-spacing:0.545px">IDLE COST</span>
<span class="th" style="left:1181px;letter-spacing:-0.085px">MEM USED</span>
<span class="th" style="left:1298.9px;letter-spacing:-0.179px">MEM REQ</span>
<span class="th" style="left:1408.2px;letter-spacing:-0.004px">MEM LIM</span>
<span class="th" style="left:1512px;letter-spacing:0.271px">MEM EFF.</span>
<span class="th" style="left:1621.8px;letter-spacing:0.211px">PODS</span>
<span class="th" style="left:1705.5px;letter-spacing:1.054px">THROTTLE</span>
<span class="th" style="left:1832px;letter-spacing:0.053px">OOM</span>
<svg class="abs" style="left:662.500px;top:565.500px" width="12" height="12" viewBox="0 0 24 24" fill="none" stroke="#6a6a6a" stroke-width="2"><path d="M12 21V4M5 11l7-7 7 7"/></svg>
<svg class="abs" style="left:995px;top:565.500px" width="12" height="12" viewBox="0 0 24 24" fill="none" stroke="#b5b5b5" stroke-width="2"><path d="M12 3v17M5 13l7 7 7-7"/></svg>
<div class="row" style="top:591.5px;"></div>
<span class="td" style="left:284.2px;top:603.0px">openmaru-apm</span>
<span class="td" style="left:495.5px;top:603.0px">140m</span>
<span class="td" style="left:612.2px;top:603.0px">7.1 cores</span>
<span class="td" style="left:727.5px;top:603.0px">2.5 cores</span>
<span class="td red" style="left:834.3px;top:603.0px">2.0%</span>
<span class="td org" style="left:942.4px;top:603.0px">6.96 cores</span>
<span class="td" style="left:1058px;top:603.0px">&#8361; 9,187/d</span>
<span class="td" style="left:1181px;top:603.0px">3.92 Gi</span>
<span class="td" style="left:1298.9px;top:603.0px">12 Gi</span>
<span class="td" style="left:1408.2px;top:603.0px">5.5 Gi</span>
<span class="td org2" style="left:1512px;top:603.0px">32.7%</span>
<span class="td" style="left:1621.8px;top:603.0px">12</span>
<span class="td" style="left:1705.5px;top:603.0px">0</span>
<span class="td" style="left:1832px;top:603.0px">0</span>
<div class="row" style="top:625.5px;"></div>
<span class="td" style="left:284.2px;top:637.0px">otel-shop</span>
<span class="td" style="left:495.5px;top:637.0px">185m</span>
<span class="td" style="left:612.2px;top:637.0px">7 cores</span>
<span class="td" style="left:727.5px;top:637.0px">-</span>
<span class="td red" style="left:834.3px;top:637.0px">2.6%</span>
<span class="td org" style="left:942.4px;top:637.0px">6.81 cores</span>
<span class="td" style="left:1058px;top:637.0px">&#8361; 8,996/d</span>
<span class="td" style="left:1181px;top:637.0px">881 Mi</span>
<span class="td" style="left:1298.9px;top:637.0px">896 Mi</span>
<span class="td" style="left:1408.2px;top:637.0px">-</span>
<span class="td org2" style="left:1512px;top:637.0px">98.3%</span>
<span class="td" style="left:1621.8px;top:637.0px">11</span>
<span class="td" style="left:1705.5px;top:637.0px">0</span>
<span class="td" style="left:1832px;top:637.0px">0</span>
<div class="row" style="top:659.5px;"></div>
<span class="td" style="left:284.2px;top:671.0px">kube-system</span>
<span class="td" style="left:495.5px;top:671.0px">306m</span>
<span class="td" style="left:612.2px;top:671.0px">5.37 cores</span>
<span class="td" style="left:727.5px;top:671.0px">300m</span>
<span class="td red" style="left:834.3px;top:671.0px">5.7%</span>
<span class="td org" style="left:942.4px;top:671.0px">5.07 cores</span>
<span class="td" style="left:1058px;top:671.0px">&#8361; 6,691/d</span>
<span class="td" style="left:1181px;top:671.0px">3.82 Gi</span>
<span class="td" style="left:1298.9px;top:671.0px">7.09 Gi</span>
<span class="td" style="left:1408.2px;top:671.0px">320 Mi</span>
<span class="td org2" style="left:1512px;top:671.0px">53.9%</span>
<span class="td" style="left:1621.8px;top:671.0px">36</span>
<span class="td red" style="left:1705.5px;top:671.0px">1</span>
<span class="td" style="left:1832px;top:671.0px">0</span>
<div class="row" style="top:693.5px;"></div>
<span class="td" style="left:284.2px;top:705.0px">openmaru-observ</span>
<span class="td" style="left:495.5px;top:705.0px">556m</span>
<span class="td" style="left:612.2px;top:705.0px">3.9 cores</span>
<span class="td" style="left:727.5px;top:705.0px">5 cores</span>
<span class="td red" style="left:834.3px;top:705.0px">14.2%</span>
<span class="td org" style="left:942.4px;top:705.0px">3.34 cores</span>
<span class="td" style="left:1058px;top:705.0px">&#8361; 4,414/d</span>
<span class="td" style="left:1181px;top:705.0px">4.45 Gi</span>
<span class="td" style="left:1298.9px;top:705.0px">8.94 Gi</span>
<span class="td" style="left:1408.2px;top:705.0px">11.5 Gi</span>
<span class="td org2" style="left:1512px;top:705.0px">49.7%</span>
<span class="td" style="left:1621.8px;top:705.0px">14</span>
<span class="td red" style="left:1705.5px;top:705.0px">2</span>
<span class="td" style="left:1832px;top:705.0px">0</span>
<div class="row" style="top:727.5px;"></div>
<span class="td" style="left:284.2px;top:739.0px">ingress-controller</span>
<span class="td" style="left:495.5px;top:739.0px">23m</span>
<span class="td" style="left:612.2px;top:739.0px">1.5 cores</span>
<span class="td" style="left:727.5px;top:739.0px">-</span>
<span class="td red" style="left:834.3px;top:739.0px">1.6%</span>
<span class="td org" style="left:942.4px;top:739.0px">1.48 cores</span>
<span class="td" style="left:1058px;top:739.0px">&#8361; 1,949/d</span>
<span class="td" style="left:1181px;top:739.0px">697 Mi</span>
<span class="td" style="left:1298.9px;top:739.0px">2.34 Gi</span>
<span class="td" style="left:1408.2px;top:739.0px">-</span>
<span class="td red" style="left:1512px;top:739.0px">29.1%</span>
<span class="td" style="left:1621.8px;top:739.0px">6</span>
<span class="td" style="left:1705.5px;top:739.0px">0</span>
<span class="td" style="left:1832px;top:739.0px">0</span>
<div class="row" style="top:761.5px;"></div>
<span class="td" style="left:284.2px;top:773.0px">dk</span>
<span class="td" style="left:495.5px;top:773.0px">530m</span>
<span class="td" style="left:612.2px;top:773.0px">2 cores</span>
<span class="td" style="left:727.5px;top:773.0px">2 cores</span>
<span class="td red" style="left:834.3px;top:773.0px">26.5%</span>
<span class="td org" style="left:942.4px;top:773.0px">1.47 cores</span>
<span class="td" style="left:1058px;top:773.0px">&#8361; 1,940/d</span>
<span class="td" style="left:1181px;top:773.0px">829 Mi</span>
<span class="td" style="left:1298.9px;top:773.0px">-</span>
<span class="td" style="left:1408.2px;top:773.0px">-</span>
<span class="td na" style="left:1512px;top:773.0px">N/A</span>
<span class="td" style="left:1621.8px;top:773.0px">3</span>
<span class="td" style="left:1705.5px;top:773.0px">0</span>
<span class="td" style="left:1832px;top:773.0px">0</span>
<span class="sig" style="left:302.2px;top:769.5px">2&sigma;</span>
<div class="row" style="top:795.5px;"></div>
<span class="td" style="left:284.2px;top:807.0px">openmaru-sso</span>
<span class="td" style="left:495.5px;top:807.0px">3m</span>
<span class="td" style="left:612.2px;top:807.0px">500m</span>
<span class="td" style="left:727.5px;top:807.0px">2 cores</span>
<span class="td red" style="left:834.3px;top:807.0px">0.7%</span>
<span class="td org" style="left:942.4px;top:807.0px">497m</span>
<span class="td" style="left:1058px;top:807.0px">&#8361; 656/d</span>
<span class="td" style="left:1181px;top:807.0px">588 Mi</span>
<span class="td" style="left:1298.9px;top:807.0px">1.66 Gi</span>
<span class="td" style="left:1408.2px;top:807.0px">1.95 Gi</span>
<span class="td org2" style="left:1512px;top:807.0px">34.6%</span>
<span class="td" style="left:1621.8px;top:807.0px">3</span>
<span class="td" style="left:1705.5px;top:807.0px">0</span>
<span class="td" style="left:1832px;top:807.0px">0</span>
<div class="row" style="top:829.5px;"></div>
<span class="td" style="left:284.2px;top:841.0px">openmaru-cogentai</span>
<span class="td" style="left:495.5px;top:841.0px">28m</span>
<span class="td" style="left:612.2px;top:841.0px">500m</span>
<span class="td" style="left:727.5px;top:841.0px">2 cores</span>
<span class="td red" style="left:834.3px;top:841.0px">5.7%</span>
<span class="td org" style="left:942.4px;top:841.0px">472m</span>
<span class="td" style="left:1058px;top:841.0px">&#8361; 622/d</span>
<span class="td" style="left:1181px;top:841.0px">2.88 Gi</span>
<span class="td" style="left:1298.9px;top:841.0px">1 Gi</span>
<span class="td" style="left:1408.2px;top:841.0px">4 Gi</span>
<span class="td org2" style="left:1512px;top:841.0px">288.1%</span>
<span class="td" style="left:1621.8px;top:841.0px">10</span>
<span class="td" style="left:1705.5px;top:841.0px">0</span>
<span class="td" style="left:1832px;top:841.0px">0</span>
<span class="sig" style="left:405.7px;top:837.5px">2&sigma;</span>
<div class="row" style="top:863.5px;"></div>
<span class="td" style="left:284.2px;top:875.0px">openmaru-cop</span>
<span class="td" style="left:495.5px;top:875.0px">7m</span>
<span class="td" style="left:612.2px;top:875.0px">300m</span>
<span class="td" style="left:727.5px;top:875.0px">1 cores</span>
<span class="td red" style="left:834.3px;top:875.0px">2.2%</span>
<span class="td org" style="left:942.4px;top:875.0px">293m</span>
<span class="td" style="left:1058px;top:875.0px">&#8361; 387/d</span>
<span class="td" style="left:1181px;top:875.0px">89 Mi</span>
<span class="td" style="left:1298.9px;top:875.0px">416 Mi</span>
<span class="td" style="left:1408.2px;top:875.0px">832 Mi</span>
<span class="td red" style="left:1512px;top:875.0px">21.4%</span>
<span class="td" style="left:1621.8px;top:875.0px">7</span>
<span class="td" style="left:1705.5px;top:875.0px">0</span>
<span class="td" style="left:1832px;top:875.0px">0</span>
<div class="row" style="top:897.5px;"></div>
<span class="td" style="left:284.2px;top:909.0px">otel</span>
<span class="td" style="left:495.5px;top:909.0px">2m</span>
<span class="td" style="left:612.2px;top:909.0px">100m</span>
<span class="td" style="left:727.5px;top:909.0px">500m</span>
<span class="td red" style="left:834.3px;top:909.0px">1.5%</span>
<span class="td org" style="left:942.4px;top:909.0px">98m</span>
<span class="td" style="left:1058px;top:909.0px">&#8361; 130/d</span>
<span class="td" style="left:1181px;top:909.0px">67 Mi</span>
<span class="td" style="left:1298.9px;top:909.0px">256 Mi</span>
<span class="td" style="left:1408.2px;top:909.0px">512 Mi</span>
<span class="td red" style="left:1512px;top:909.0px">26.3%</span>
<span class="td" style="left:1621.8px;top:909.0px">1</span>
<span class="td" style="left:1705.5px;top:909.0px">0</span>
<span class="td" style="left:1832px;top:909.0px">0</span>
<div class="row" style="top:931.5px;"></div>
<span class="td" style="left:284.2px;top:943.0px">test-cronhpa</span>
<span class="td" style="left:495.5px;top:943.0px">-</span>
<span class="td" style="left:612.2px;top:943.0px">-</span>
<span class="td" style="left:727.5px;top:943.0px">-</span>
<span class="td na" style="left:834.3px;top:943.0px">N/A</span>
<span class="td" style="left:942.4px;top:943.0px">N/A</span>
<span class="td" style="left:1058px;top:943.0px">-</span>
<span class="td" style="left:1181px;top:943.0px">-</span>
<span class="td" style="left:1298.9px;top:943.0px">-</span>
<span class="td" style="left:1408.2px;top:943.0px">-</span>
<span class="td na" style="left:1512px;top:943.0px">N/A</span>
<span class="td" style="left:1621.8px;top:943.0px">0</span>
<span class="td" style="left:1705.5px;top:943.0px">0</span>
<span class="td" style="left:1832px;top:943.0px">0</span>
<div class="row" style="top:965.5px;"></div>
<span class="td" style="left:284.2px;top:977.0px">local-path-storage</span>
<span class="td" style="left:495.5px;top:977.0px">0m</span>
<span class="td" style="left:612.2px;top:977.0px">-</span>
<span class="td" style="left:727.5px;top:977.0px">-</span>
<span class="td na" style="left:834.3px;top:977.0px">N/A</span>
<span class="td" style="left:942.4px;top:977.0px">N/A</span>
<span class="td" style="left:1058px;top:977.0px">-</span>
<span class="td" style="left:1181px;top:977.0px">12 Mi</span>
<span class="td" style="left:1298.9px;top:977.0px">-</span>
<span class="td" style="left:1408.2px;top:977.0px">-</span>
<span class="td na" style="left:1512px;top:977.0px">N/A</span>
<span class="td" style="left:1621.8px;top:977.0px">1</span>
<span class="td" style="left:1705.5px;top:977.0px">0</span>
<span class="td" style="left:1832px;top:977.0px">0</span>
<div class="row" style="top:999.5px;"></div>
<span class="td" style="left:284.2px;top:1011.0px">nfs-provisioner</span>
<span class="td" style="left:495.5px;top:1011.0px">1m</span>
<span class="td" style="left:612.2px;top:1011.0px">-</span>
<span class="td" style="left:727.5px;top:1011.0px">-</span>
<span class="td na" style="left:834.3px;top:1011.0px">N/A</span>
<span class="td" style="left:942.4px;top:1011.0px">N/A</span>
<span class="td" style="left:1058px;top:1011.0px">-</span>
<span class="td" style="left:1181px;top:1011.0px">20 Mi</span>
<span class="td" style="left:1298.9px;top:1011.0px">-</span>
<span class="td" style="left:1408.2px;top:1011.0px">-</span>
<span class="td na" style="left:1512px;top:1011.0px">N/A</span>
<span class="td" style="left:1621.8px;top:1011.0px">1</span>
<span class="td" style="left:1705.5px;top:1011.0px">0</span>
<span class="td" style="left:1832px;top:1011.0px">0</span>
<div class="row" style="top:1033.5px;"></div>
<span class="td" style="left:284.2px;top:1045.0px">cert-manager</span>
<span class="td" style="left:495.5px;top:1045.0px">1m</span>
<span class="td" style="left:612.2px;top:1045.0px">-</span>
<span class="td" style="left:727.5px;top:1045.0px">-</span>
<span class="td na" style="left:834.3px;top:1045.0px">N/A</span>
<span class="td" style="left:942.4px;top:1045.0px">N/A</span>
<span class="td" style="left:1058px;top:1045.0px">-</span>
<span class="td" style="left:1181px;top:1045.0px">150 Mi</span>
<span class="td" style="left:1298.9px;top:1045.0px">-</span>
<span class="td" style="left:1408.2px;top:1045.0px">-</span>
<span class="td na" style="left:1512px;top:1045.0px">N/A</span>
<span class="td" style="left:1621.8px;top:1045.0px">3</span>
<span class="td" style="left:1705.5px;top:1045.0px">0</span>
<span class="td" style="left:1832px;top:1045.0px">0</span>
<div class="row" style="top:1067.5px;"></div>
<span class="td" style="left:284.2px;top:1079.0px">argocd</span>
<span class="td" style="left:495.5px;top:1079.0px">2m</span>
<span class="td" style="left:612.2px;top:1079.0px">-</span>
<span class="td" style="left:727.5px;top:1079.0px">-</span>
<span class="td na" style="left:834.3px;top:1079.0px">N/A</span>
<span class="td" style="left:942.4px;top:1079.0px">N/A</span>
<span class="td" style="left:1058px;top:1079.0px">-</span>
<span class="td" style="left:1181px;top:1079.0px">219 Mi</span>
<span class="td" style="left:1298.9px;top:1079.0px">-</span>
<span class="td" style="left:1408.2px;top:1079.0px">-</span>
<span class="td na" style="left:1512px;top:1079.0px">N/A</span>
<span class="td" style="left:1621.8px;top:1079.0px">7</span>
<span class="td" style="left:1705.5px;top:1079.0px">0</span>
<span class="td" style="left:1832px;top:1079.0px">0</span>
<div class="row" style="top:1101.5px;border-bottom:none;"></div>
<span class="td" style="left:284.2px;top:1113.0px">openmaru-logging</span>
<span class="td" style="left:495.5px;top:1113.0px">4m</span>
<span class="td" style="left:612.2px;top:1113.0px">-</span>
<span class="td" style="left:727.5px;top:1113.0px">-</span>
<span class="td na" style="left:834.3px;top:1113.0px">N/A</span>
<span class="td" style="left:942.4px;top:1113.0px">N/A</span>
<span class="td" style="left:1058px;top:1113.0px">-</span>
<span class="td" style="left:1181px;top:1113.0px">113 Mi</span>
<span class="td" style="left:1298.9px;top:1113.0px">-</span>
<span class="td" style="left:1408.2px;top:1113.0px">-</span>
<span class="td na" style="left:1512px;top:1113.0px">N/A</span>
<span class="td" style="left:1621.8px;top:1113.0px">5</span>
<span class="td" style="left:1705.5px;top:1113.0px">0</span>
<span class="td" style="left:1832px;top:1113.0px">0</span>
<span class="t" style="left:1420.400px;top:1157px;font-size:13px;color:#9c9c9c;letter-spacing:0.241px">Items per page:</span>
<div class="abs" style="left:1523px;top:1147.500px;width:90px;height:33.500px;border:1px solid #cfcecb;border-radius:5px;background:#e6e5e2"></div>
<span class="t" style="left:1534.700px;top:1157.300px;font-size:13px;color:#9c9c9c">25</span>
<svg class="abs" style="left:1592.500px;top:1161.300px" width="10.500" height="5.500" viewBox="0 0 10 5"><path d="M0 0h10L5 5z" fill="#8e8e8e"/></svg>
<span class="t mono" style="left:1646.100px;top:1157.500px;font-size:12.300px;color:#8c8c8c;letter-spacing:-0.011px">1-16 of 16</span>
<svg class="abs" style="left:1747px;top:1156px" width="16" height="16" viewBox="0 0 24 24" fill="none" stroke="#cfcfcd" stroke-width="2"><path d="M7 5v14M18 6l-6.500 6 6.500 6"/></svg>
<svg class="abs" style="left:1785px;top:1156px" width="16" height="16" viewBox="0 0 24 24" fill="none" stroke="#cfcfcd" stroke-width="2"><path d="M15 6l-6.500 6 6.500 6"/></svg>
<svg class="abs" style="left:1823px;top:1156px" width="16" height="16" viewBox="0 0 24 24" fill="none" stroke="#cfcfcd" stroke-width="2"><path d="M9 6l6.500 6-6.500 6"/></svg>
<svg class="abs" style="left:1860px;top:1156px" width="16" height="16" viewBox="0 0 24 24" fill="none" stroke="#cfcfcd" stroke-width="2"><path d="M17 5v14M6 6l6.500 6-6.500 6"/></svg>
<svg class="abs" style="left:1790px;top:900px;z-index:40" width="120" height="100" viewBox="0 0 1584 1320">
 <defs>
  <radialGradient id="rh" cx="45%" cy="30%" r="75%"><stop offset="0" stop-color="#fffaf5"/><stop offset=".55" stop-color="#f5e8df"/><stop offset="1" stop-color="#dcc6b9"/></radialGradient>
  <linearGradient id="rr" x1="0" y1="0" x2="1" y2="1"><stop offset="0" stop-color="#ff4d2c"/><stop offset="1" stop-color="#d9270f"/></linearGradient>
 </defs>
 <path d="M712 720 Q620 765 548 672 L600 618 Q650 680 722 640 Z" fill="#f0ddd2"/>
 <path d="M470 560 Q448 500 500 488 Q540 488 556 540 Q572 520 590 545 Q602 600 576 652 Q520 690 490 640 Q468 600 470 560Z" fill="url(#rr)"/>
 <path d="M1000 700 Q1085 740 1112 830 L1058 852 Q1040 790 988 772Z" fill="#f1e0d6"/>
 <path d="M1048 850 Q1058 800 1110 804 Q1152 820 1150 880 Q1140 940 1100 950 Q1073 930 1080 908 Q1048 900 1048 850Z" fill="url(#rr)"/>
 <path d="M664 858 Q700 980 850 1096 Q982 990 1006 858 Q840 962 664 858Z" fill="url(#rr)"/>
 <path d="M690 655 Q640 760 667 872 Q840 962 1004 866 Q1040 760 990 655Z" fill="url(#rh)"/>
 <path d="M738 648 Q760 702 850 722 Q950 700 1002 638 Q870 692 738 648Z" fill="url(#rr)"/>
 <path d="M870 157 Q760 200 660 380 Q588 520 680 602 Q780 662 900 652 Q1040 642 1096 560 Q1132 460 1060 340 Q980 190 870 157Z" fill="url(#rh)"/>
 <ellipse cx="1090" cy="450" rx="24" ry="76" fill="url(#rr)"/>
 <path d="M783 296 Q830 224 842 234 Q872 260 890 299 Q835 285 783 296Z" fill="url(#rr)"/>
 <rect x="655" y="345" width="350" height="248" rx="116" fill="#14110e"/>
 <ellipse cx="735" cy="475" rx="40" ry="58" fill="#19efe4"/>
 <ellipse cx="915" cy="470" rx="40" ry="58" fill="#19efe4"/>
 <g stroke="#ee3a20" stroke-width="34" stroke-linecap="round" stroke-linejoin="round" fill="none"><path d="M745 850 L800 765 L840 850"/><path d="M877 815 L897 850"/></g><circle cx="862" cy="770" r="18" fill="#ee3a20"/>
</svg>
</div>
</body>
</html>
